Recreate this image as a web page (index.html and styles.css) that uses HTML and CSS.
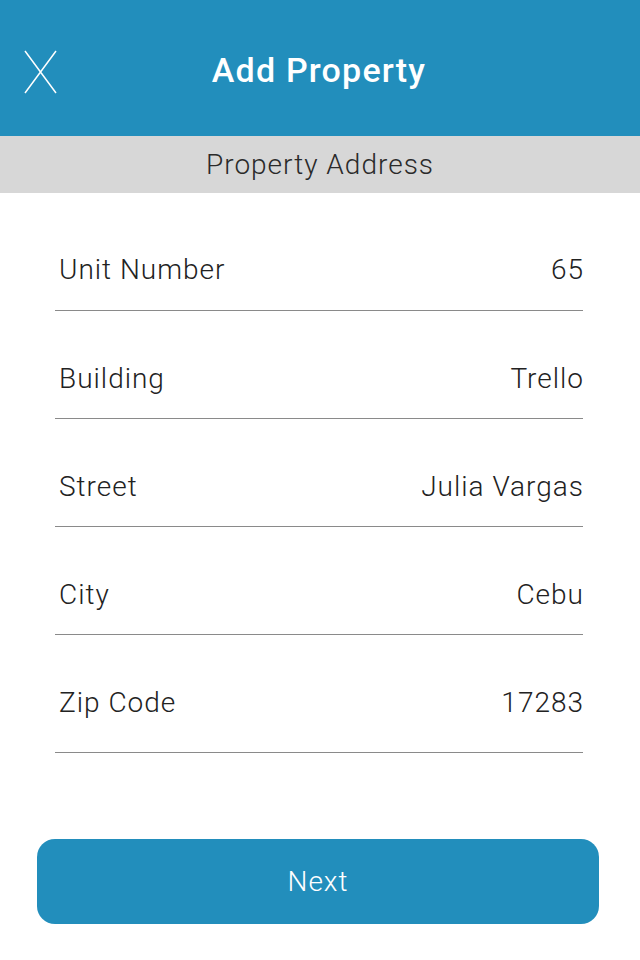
FILE: index.html
```html
<!DOCTYPE html>
<html>
<head>
<meta charset="utf-8">
<link rel="stylesheet" href="styles.css">
</head>
<body>
<div class="app">
  <header class="topbar">
    <button class="close" aria-label="Close">
      <svg width="33" height="44" viewBox="0 0 33 44"><path d="M1 1 L32 43 M32 1 L1 43" stroke="#fff" stroke-width="1.5" fill="none"/></svg>
    </button>
    <h1 class="title">Add Property</h1>
    <span></span>
  </header>
  <div class="section">Property Address</div>
  <div class="form">
    <div class="row"><span class="label">Unit Number</span><span class="value">65</span></div>
    <div class="row"><span class="label">Building</span><span class="value">Trello</span></div>
    <div class="row"><span class="label">Street</span><span class="value">Julia Vargas</span></div>
    <div class="row"><span class="label">City</span><span class="value">Cebu</span></div>
    <div class="row"><span class="label">Zip Code</span><span class="value">17283</span></div>
  </div>
  <button class="next">Next</button>
</div>
</body>
</html>
```
FILE: styles.css
```css
* { box-sizing: border-box; }
html, body { margin: 0; padding: 0; background: #fff; }
body { font-family: Roboto, "Noto Sans", sans-serif; }
.app { width: 640px; height: 960px; overflow: hidden; }
.topbar {
  height: 136px;
  background: #228ebc;
  display: grid;
  grid-template-columns: 1fr auto 1fr;
  align-items: center;
}
.close {
  justify-self: start;
  margin: 8px 0 0 24px;
  padding: 0;
  border: 0;
  background: none;
  display: flex;
}
.title {
  margin: 4px 0 0 -2px;
  color: #fff;
  font-size: 34px;
  font-weight: 500;
  letter-spacing: 1.2px;
  line-height: 40px;
}
.section {
  height: 57px;
  background: #d7d7d7;
  color: #2a2a2a;
  font-size: 28px;
  font-weight: 300;
  letter-spacing: 1px;
  display: flex;
  align-items: center;
  justify-content: center;
}
.form { margin: 0 57px 0 55px; padding-top: 10px; }
.row {
  display: flex;
  justify-content: space-between;
  align-items: center;
  padding: 47px 0 19px 4px;
  border-bottom: 1px solid #8a8a8a;
  font-size: 28px;
  font-weight: 300;
  letter-spacing: 1px;
  line-height: 40px;
  color: #222;
}
.row:first-child { padding-bottom: 20px; }
.row + .row { padding-top: 48px; }
.value { margin-right: -1px; }
.row:last-child { padding-bottom: 29px; }
.next {
  display: flex;
  align-items: center;
  justify-content: center;
  width: 562px;
  height: 85px;
  margin: 86px 0 0 37px;
  border: 0;
  border-radius: 18px;
  background: #228ebc;
  color: #fff;
  font-family: Roboto, "Noto Sans", sans-serif;
  font-size: 28px;
  font-weight: 300;
  letter-spacing: 1px;
}
```
